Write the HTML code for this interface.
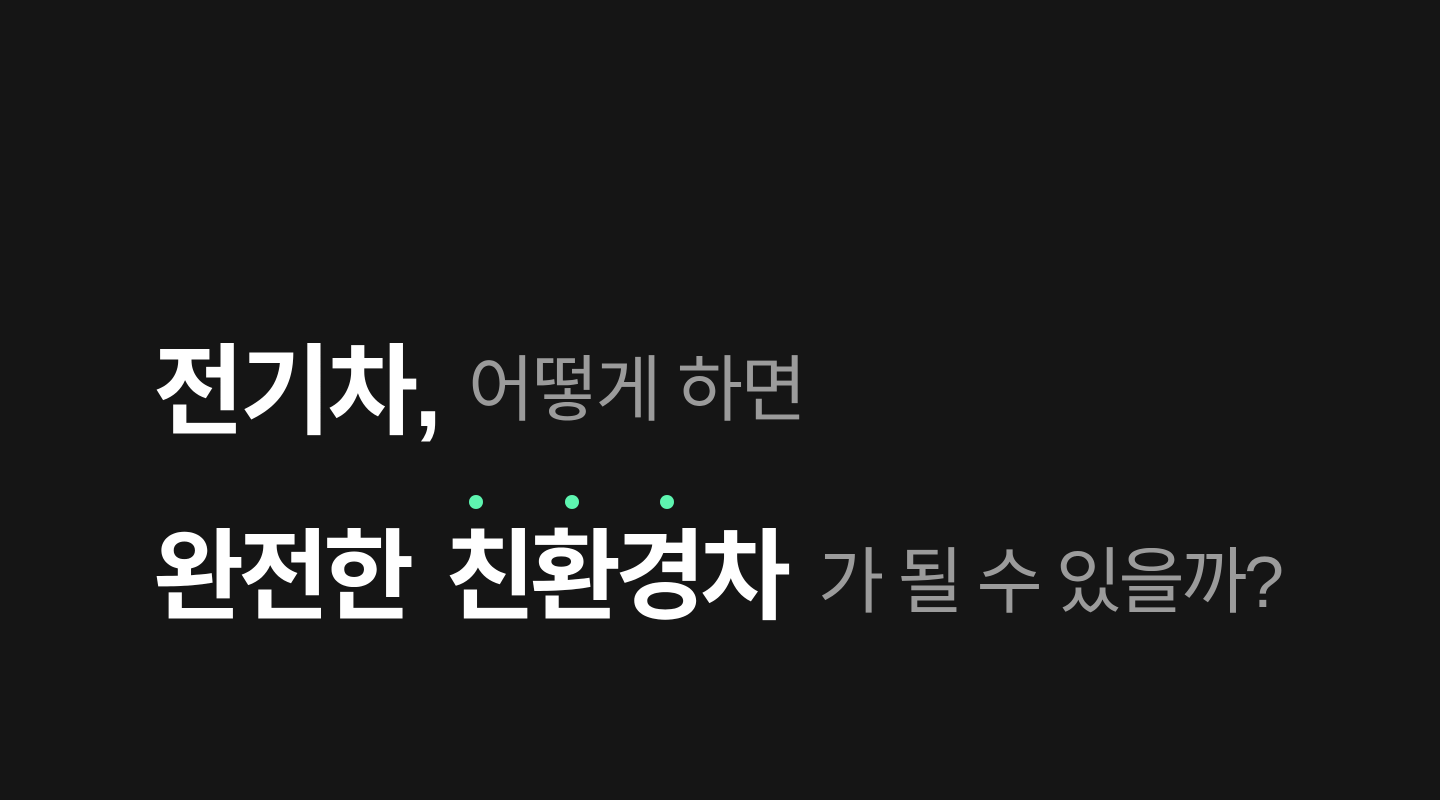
<!DOCTYPE html>
<html><head><meta charset="utf-8"><style>
html,body{margin:0;padding:0;width:1440px;height:800px;background:#151515;overflow:hidden}
.t{position:absolute;line-height:1;white-space:nowrap;font-family:"Liberation Sans","Noto Sans CJK KR",sans-serif}
.b{font-size:99px;font-weight:700;color:#fff;letter-spacing:-6px}
.g{font-size:72px;font-weight:400;color:#9b9b9b;letter-spacing:-2.5px}
.d{position:absolute;width:14px;height:14px;border-radius:50%;background:#5ef5b0;top:495px}
</style></head><body>
<div class="t b" style="left:153px;top:342px;letter-spacing:-4px">전기차,</div>
<div class="t g" style="left:468px;top:355px">어떻게 하면</div>
<div class="t b" style="left:153px;top:527px;word-spacing:15px">완전한 친환경차</div>
<div class="t g" style="left:818px;top:547px;letter-spacing:-3.5px">가 될 수 있을까?</div>
<div class="d" style="left:469px"></div>
<div class="d" style="left:565px"></div>
<div class="d" style="left:660px"></div>
</body></html>
